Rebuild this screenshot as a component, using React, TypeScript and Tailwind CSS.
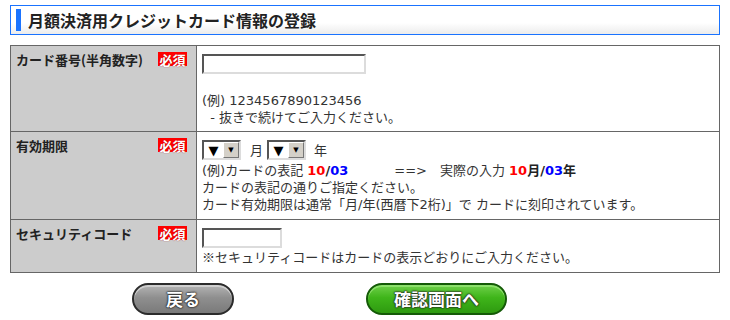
import React from "react";

const FONT = { fontFamily: '"DejaVu Sans", "Noto Sans CJK JP", sans-serif' };
const JP = { fontFamily: '"Noto Sans CJK JP", sans-serif' };

function Required() {
  return (
    <span
      className="mt-[1px] inline-flex h-[14px] w-[29px] items-center justify-center bg-[#ff0000] text-[13px] font-bold leading-none text-white [text-shadow:0_0_1px_#900]"
      style={JP}
    >
      必須
    </span>
  );
}

function TextBox({ width }: { width: number }) {
  return (
    <div
      className="h-[20px] border-2 border-t-[#555] border-l-[#555] border-r-[#dcdcdc] border-b-[#dcdcdc] bg-white"
      style={{ width }}
    />
  );
}

function FakeSelect() {
  return (
    <div className="flex h-[20px] w-[39px] items-stretch border-2 border-t-[#555] border-l-[#555] border-r-[#dcdcdc] border-b-[#dcdcdc] bg-white">
      <div className="flex flex-1 items-center justify-center text-[13px] leading-none text-black">
        ▼
      </div>
      <div className="flex w-[16px] items-center justify-center border border-t-white border-l-white border-r-[#777] border-b-[#777] bg-[#d4d0c8] text-[7px] leading-none text-black">
        ▼
      </div>
    </div>
  );
}

function Label({ children }: { children: React.ReactNode }) {
  return (
    <td className="w-[186px] border border-[#666] bg-[#cccccc] pt-[5px] pb-[5px] pl-[5px] pr-[9px] align-top">
      <div className="flex items-start justify-between">
        <span className="text-[13px] font-bold leading-[17px] text-[#222]" style={JP}>
          {children}
        </span>
        <Required />
      </div>
    </td>
  );
}

function PillButton({
  label,
  width,
  tone,
}: {
  label: string;
  width: number;
  tone: "gray" | "green";
}) {
  const body =
    tone === "gray"
      ? "border-[#2b2b2b] bg-[linear-gradient(180deg,#b4b4b4_0%,#8f8f8f_45%,#7a7a7a_100%)] shadow-[inset_0_2px_0_#cfcfcf]"
      : "border-[#145a07] bg-[linear-gradient(180deg,#6fd04a_0%,#3fb51a_45%,#2e9a10_100%)] shadow-[inset_0_2px_0_#8be06a]";
  return (
    <button
      type="button"
      className={`flex h-[32px] items-center justify-center rounded-full border-2 ${body} text-[17px] font-bold text-white [text-shadow:0_0_2px_#222,0_0_2px_#222,0_0_1px_#222]`}
      style={{ width, ...JP }}
    >
      {label}
    </button>
  );
}

export default function App() {
  return (
    <div className="w-[730px] bg-white text-[#333]" style={FONT}>
      <div className="pt-[5px] pl-[10px]">
        <div className="flex h-[30px] w-[710px] items-center border border-[#1a73ff] bg-[linear-gradient(180deg,#ffffff_0%,#ffffff_60%,#ececec_100%)] pl-[5px]">
          <div className="h-[22px] w-[5px] bg-[#1a73ff]" />
          <h1 className="ml-[7px] text-[16px] font-bold leading-none text-[#222]" style={JP}>
            月額決済用クレジットカード情報の登録
          </h1>
        </div>
      </div>

      <div className="pt-[10px] pl-[10px]">
        <table className="w-[710px] table-fixed border-collapse text-[13px] leading-[17px]">
          <colgroup>
            <col className="w-[186px]" />
            <col />
          </colgroup>
          <tbody>
            <tr className="h-[86px]">
              <Label>カード番号(半角数字)</Label>
              <td className="border border-[#666] pt-[8px] pb-[5px] pl-[5px] align-top">
                <TextBox width={164} />
                <div className="mt-[18px]">(例) 1234567890123456</div>
                <div>&nbsp;&nbsp;- 抜きで続けてご入力ください。</div>
              </td>
            </tr>
            <tr className="h-[88px]">
              <Label>有効期限</Label>
              <td className="border border-[#666] pt-[8px] pb-[6px] pl-[5px] align-top">
                <div className="flex items-center">
                  <FakeSelect />
                  <span className="ml-[9px]">月</span>
                  <span className="ml-[4px]">
                    <FakeSelect />
                  </span>
                  <span className="ml-[8px]">年</span>
                </div>
                <div className="mt-[2px] whitespace-nowrap">
                  (例)カードの表記{" "}
                  <b className="text-[#ff0000]">10</b>
                  <b className="text-[#222]">/</b>
                  <b className="text-[#0000ff]">03</b>
                  <span className="ml-[46px]">==&gt;</span>
                  <span className="ml-[13px]">実際の入力 </span>
                  <b className="text-[#ff0000]">10</b>
                  <b className="text-[#222]">月/</b>
                  <b className="text-[#0000ff]">03</b>
                  <b className="text-[#222]">年</b>
                </div>
                <div>カードの表記の通りご指定ください。</div>
                <div className="whitespace-nowrap">
                  カード有効期限は通常「月/年(西暦下2桁)」で カードに刻印されています。
                </div>
              </td>
            </tr>
            <tr className="h-[52px]">
              <Label>セキュリティコード</Label>
              <td className="border border-[#666] pt-[8px] pb-[6px] pl-[5px] align-top">
                <TextBox width={80} />
                <div>
                  <span style={JP}>※</span>
                  セキュリティコードはカードの表示どおりにご入力ください。
                </div>
              </td>
            </tr>
          </tbody>
        </table>
      </div>

      <div className="flex gap-[132px] pt-[10px] pl-[132px] pb-[6px]">
        <PillButton label="戻る" width={102} tone="gray" />
        <PillButton label="確認画面へ" width={141} tone="green" />
      </div>
    </div>
  );
}
